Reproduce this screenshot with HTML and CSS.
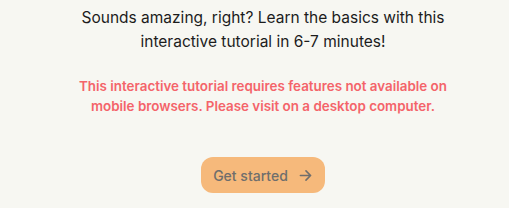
FILE: index.html
```html
<!DOCTYPE html>
<html>
<head>
    <link rel="stylesheet" href="styles.css">
</head>
<body>
    <div class="intro">
        <p class="lead">Sounds amazing, right? Learn the basics with this interactive tutorial in 6-7 minutes!</p>
        <p class="warning">This interactive tutorial requires features not available on mobile browsers. Please visit on a desktop computer.</p>
        <button class="start" type="button">
            Get started
            <svg width="13" height="13" viewBox="0 0 14 14" fill="none" stroke="currentColor" stroke-width="1.7" stroke-linecap="round" stroke-linejoin="round">
                <path d="M1.5 7h11M7.5 2 12.5 7l-5 5"/>
            </svg>
        </button>
    </div>
</body>
</html>
```

FILE: styles.css
```css
body {
    margin: 0;
    background: #f7f7f2;
    font-family: Inter, "Liberation Sans", sans-serif;
}
.intro {
    display: flex;
    flex-direction: column;
    align-items: center;
    padding: 6px 52px 0 69px;
    text-align: center;
}
.lead {
    margin: 0;
    max-width: 390px;
    font-size: 15.5px;
    line-height: 24px;
    color: #1c1c1c;
}
.warning {
    margin: 22px 0 0;
    max-width: 390px;
    font-size: 13.4px;
    font-weight: 600;
    line-height: 20px;
    color: #f4646a;
}
.start {
    margin-top: 41px;
    display: flex;
    align-items: center;
    gap: 11px;
    padding: 0 13px 0 12px;
    height: 36px;
    border: none;
    border-radius: 12px;
    background: #f6b97b;
    color: #6f6e6c;
    font-family: inherit;
    font-size: 14px;
    font-weight: 500;
}
```
